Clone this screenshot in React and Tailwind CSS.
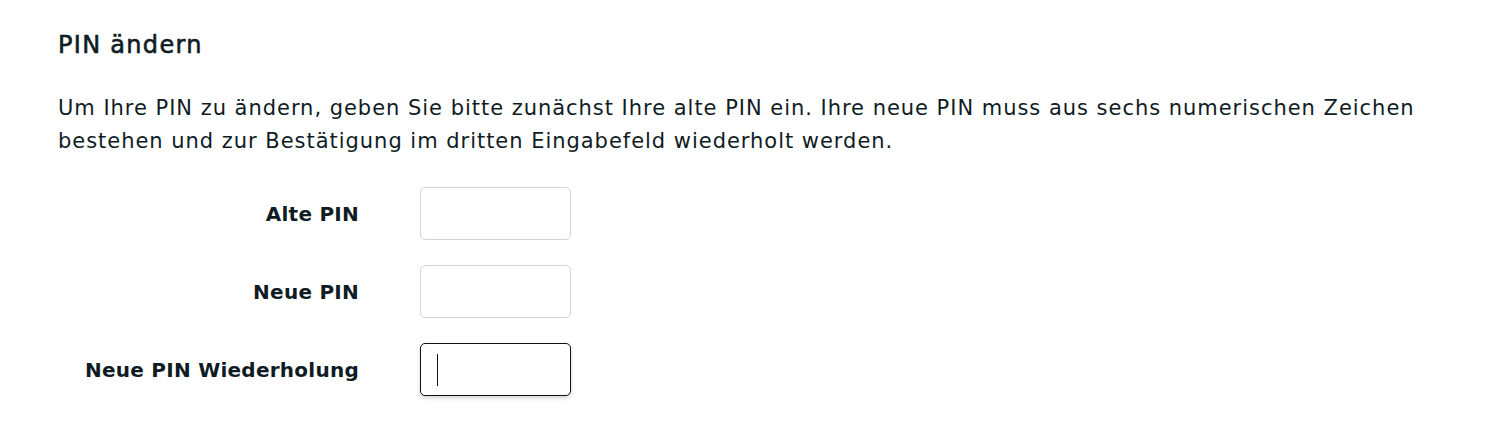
function PinRow({ label, focused }) {
  return (
    <div className="flex items-center">
      <label className="w-[301px] text-right text-[20px] font-bold tracking-[0.25px]">{label}</label>
      <div
        className={
          focused
            ? "ml-[61px] w-[151px] h-[53px] rounded-[5px] border border-[#111111] bg-white flex items-center shadow-[0_2px_4px_rgba(0,0,0,0.18)]"
            : "ml-[61px] w-[151px] h-[53px] rounded-[5px] border border-[#d3d3d3] bg-white"
        }
      >
        {focused && <div className="ml-[16px] w-px h-[32px] bg-[#111111]" />}
      </div>
    </div>
  );
}

export default function App() {
  return (
    <div className="w-[1489px] h-[440px] bg-white text-[#0f1c24] pl-[58px] pr-[40px] pt-[30px] font-['DejaVu_Sans',sans-serif]">
      <h2 className="text-[24px] leading-[30px] font-normal tracking-[1.3px] [-webkit-text-stroke:0.6px_#0f1c24]">PIN ändern</h2>
      <p className="mt-[32px] text-[21px] leading-[33px] tracking-[0.97px]">
        Um Ihre PIN zu ändern, geben Sie bitte zunächst Ihre alte PIN ein. Ihre neue PIN muss aus sechs numerischen Zeichen bestehen und zur Bestätigung im dritten Eingabefeld wiederholt werden.
      </p>
      <div className="mt-[29px] flex flex-col gap-[25px]">
        <PinRow label="Alte PIN" />
        <PinRow label="Neue PIN" />
        <PinRow label="Neue PIN Wiederholung" focused />
      </div>
    </div>
  );
}
